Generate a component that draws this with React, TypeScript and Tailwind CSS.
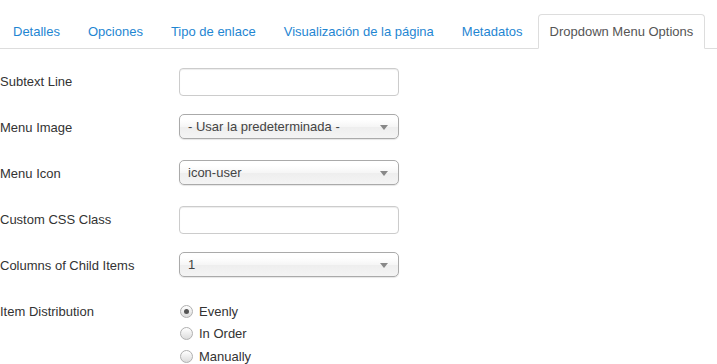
import React from "react";

const tabs = [
  "Detalles",
  "Opciones",
  "Tipo de enlace",
  "Visualización de la página",
  "Metadatos",
];

function TextInput() {
  return (
    <div className="w-[220px] h-[28px] border border-[#cccccc] rounded-[4px] bg-white shadow-[inset_0_1px_1px_rgba(0,0,0,0.075)]" />
  );
}

function Select({ value }: { value: string }) {
  return (
    <div className="relative w-[220px] h-[25px] border border-[#aaaaaa] rounded-[5px] pl-[8px] text-[#444444] leading-[23px] bg-[linear-gradient(#ffffff_20%,#f6f6f6_50%,#eeeeee_52%,#f4f4f4_100%)] shadow-[0_1px_1px_rgba(0,0,0,0.1)]">
      {value}
      <span className="absolute right-[10px] top-[10px] w-0 h-0 border-l-[4px] border-r-[4px] border-t-[5px] border-l-transparent border-r-transparent border-t-[#888888]" />
    </div>
  );
}

function Radio({ label, checked }: { label: string; checked?: boolean }) {
  return (
    <div className="flex items-center h-[22.5px]">
      <span className="ml-[1px] w-[13px] h-[13px] rounded-full border border-[#b0b0b0] bg-[linear-gradient(#ffffff,#dcdcdc)] flex items-center justify-center">
        {checked && <span className="w-[5px] h-[5px] rounded-full bg-[#555555]" />}
      </span>
      <span className="ml-[6px] text-[#333333]">{label}</span>
    </div>
  );
}

function Row({ label, children }: { label: string; children: React.ReactNode }) {
  return (
    <div className="flex min-h-[28px] mb-[18px]">
      <div className="w-[179px] shrink-0 pt-[5px] leading-[18px] text-[#333333]">{label}</div>
      <div>{children}</div>
    </div>
  );
}

export default function App() {
  return (
    <div
      className="w-[717px] h-[364px] overflow-hidden bg-white text-[13px]"
      style={{ fontFamily: '"Liberation Sans", Arial, sans-serif' }}
    >
      <div className="mt-[14px] flex border-b border-[#dddddd] h-[35px]">
        {tabs.map((t) => (
          <div
            key={t}
            className="mr-[2px] px-[13px] pt-[9px] leading-[18px] text-[#1f86d2] whitespace-nowrap"
          >
            {t}
          </div>
        ))}
        <div className="mr-[2px] px-[11px] pt-[8px] leading-[18px] h-[35px] border border-[#dddddd] border-b-white rounded-t-[4px] bg-white text-[#555555] whitespace-nowrap">
          Dropdown Menu Options
        </div>
      </div>
      <div className="mt-[19px]">
        <Row label="Subtext Line">
          <TextInput />
        </Row>
        <Row label="Menu Image">
          <Select value="- Usar la predeterminada -" />
        </Row>
        <Row label="Menu Icon">
          <Select value="icon-user" />
        </Row>
        <Row label="Custom CSS Class">
          <TextInput />
        </Row>
        <Row label="Columns of Child Items">
          <Select value="1" />
        </Row>
        <Row label="Item Distribution">
          <div className="pt-[2px]">
            <Radio label="Evenly" checked />
            <Radio label="In Order" />
            <Radio label="Manually" />
          </div>
        </Row>
      </div>
    </div>
  );
}
